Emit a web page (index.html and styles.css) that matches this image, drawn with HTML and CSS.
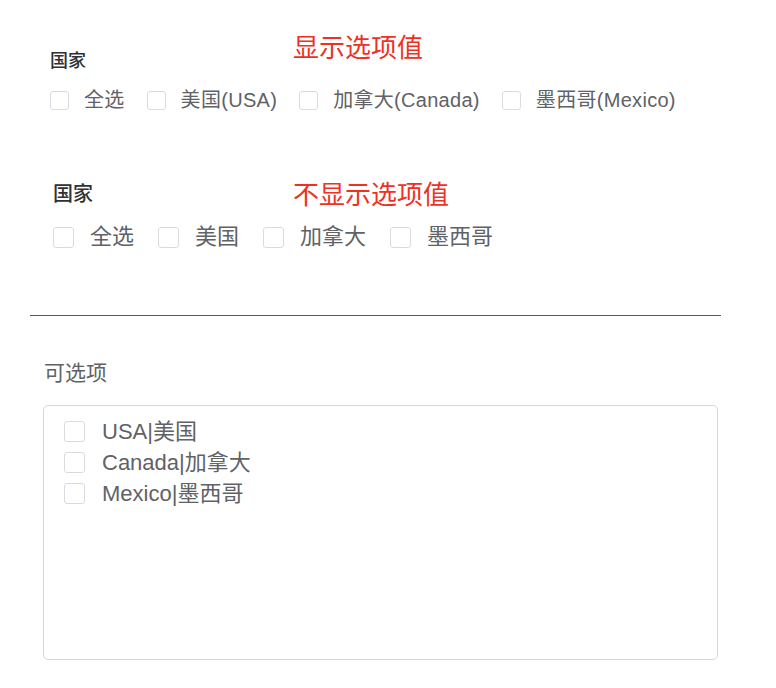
FILE: index.html
```html
<!DOCTYPE html>
<html lang="zh-CN">
<head>
<meta charset="utf-8">
<title>国家选择</title>
<link rel="stylesheet" href="styles.css">
</head>
<body>
<div class="page">
  <section class="demo demo-one">
    <div class="demo-head">
      <div class="field-label">国家</div>
      <div class="note">显示选项值</div>
    </div>
    <div class="check-row">
      <label class="check"><span class="box"></span><span class="text">全选</span></label>
      <label class="check"><span class="box"></span><span class="text">美国(USA)</span></label>
      <label class="check"><span class="box"></span><span class="text">加拿大(Canada)</span></label>
      <label class="check"><span class="box"></span><span class="text">墨西哥(Mexico)</span></label>
    </div>
  </section>

  <section class="demo demo-two">
    <div class="demo-head">
      <div class="field-label">国家</div>
      <div class="note">不显示选项值</div>
    </div>
    <div class="check-row">
      <label class="check"><span class="box"></span><span class="text">全选</span></label>
      <label class="check"><span class="box"></span><span class="text">美国</span></label>
      <label class="check"><span class="box"></span><span class="text">加拿大</span></label>
      <label class="check"><span class="box"></span><span class="text">墨西哥</span></label>
    </div>
  </section>

  <hr class="divider">

  <section class="options">
    <div class="options-title">可选项</div>
    <div class="options-box">
      <label class="check"><span class="box"></span><span class="text">USA|美国</span></label>
      <label class="check"><span class="box"></span><span class="text">Canada|加拿大</span></label>
      <label class="check"><span class="box"></span><span class="text">Mexico|墨西哥</span></label>
    </div>
  </section>
</div>
</body>
</html>
```

FILE: styles.css
```css
html, body {
  margin: 0;
  padding: 0;
  background: #ffffff;
}

body {
  font-family: "Liberation Sans", "Noto Sans CJK SC", sans-serif;
  color: #606266;
}

.page {
  padding: 33px 0 0 30px;
  width: 691px;
}

.demo-head {
  display: flex;
  align-items: flex-start;
}

.field-label {
  color: #303133;
  font-weight: 500;
}

.note {
  color: #ee3124;
  font-size: 26px;
  line-height: 30px;
}

.check-row {
  display: flex;
  align-items: center;
}

.check {
  display: flex;
  align-items: center;
}

.box {
  box-sizing: border-box;
  border: 1px solid #d8dbe2;
  border-radius: 3px;
  background: #ffffff;
  flex: none;
}

/* first demo */
.demo-one {
  padding-left: 20px;
}

.demo-one .field-label {
  flex: 0 0 243px;
  margin-top: 19px;
  font-size: 18px;
  line-height: 18px;
}

.demo-one .check-row {
  margin-top: 20px;
  font-size: 20px;
  line-height: 20px;
  letter-spacing: 0.3px;
}

.demo-one .check {
  margin-right: 22px;
}

.demo-one .box {
  width: 19px;
  height: 19px;
  margin-right: 15px;
}

/* second demo */
.demo-two {
  padding-left: 23px;
  margin-top: 70px;
}

.demo-two .field-label {
  flex: 0 0 240px;
  margin-top: 4px;
  font-size: 20px;
  line-height: 20px;
}

.demo-two .check-row {
  margin-top: 16px;
  font-size: 22px;
  line-height: 22px;
}

.demo-two .check {
  margin-right: 24px;
}

.demo-two .box {
  width: 21px;
  height: 21px;
  margin-right: 16px;
}

.divider {
  margin: 67px 0 0 0;
  border: 0;
  border-top: 1px solid #625263;
  height: 0;
}

.options {
  padding-left: 13px;
}

.options-title {
  margin-top: 46px;
  font-size: 21px;
  line-height: 21px;
  padding-left: 1px;
  color: #606266;
}

.options-box {
  box-sizing: border-box;
  margin-top: 22px;
  width: 675px;
  height: 255px;
  border: 1px solid #d6d7de;
  border-radius: 5px;
  padding: 10px 20px;
  display: flex;
  flex-direction: column;
}

.options-box .check {
  height: 31px;
  font-size: 22px;
  line-height: 22px;
}

.options-box .box {
  width: 21px;
  height: 21px;
  margin-right: 17px;
}
```
